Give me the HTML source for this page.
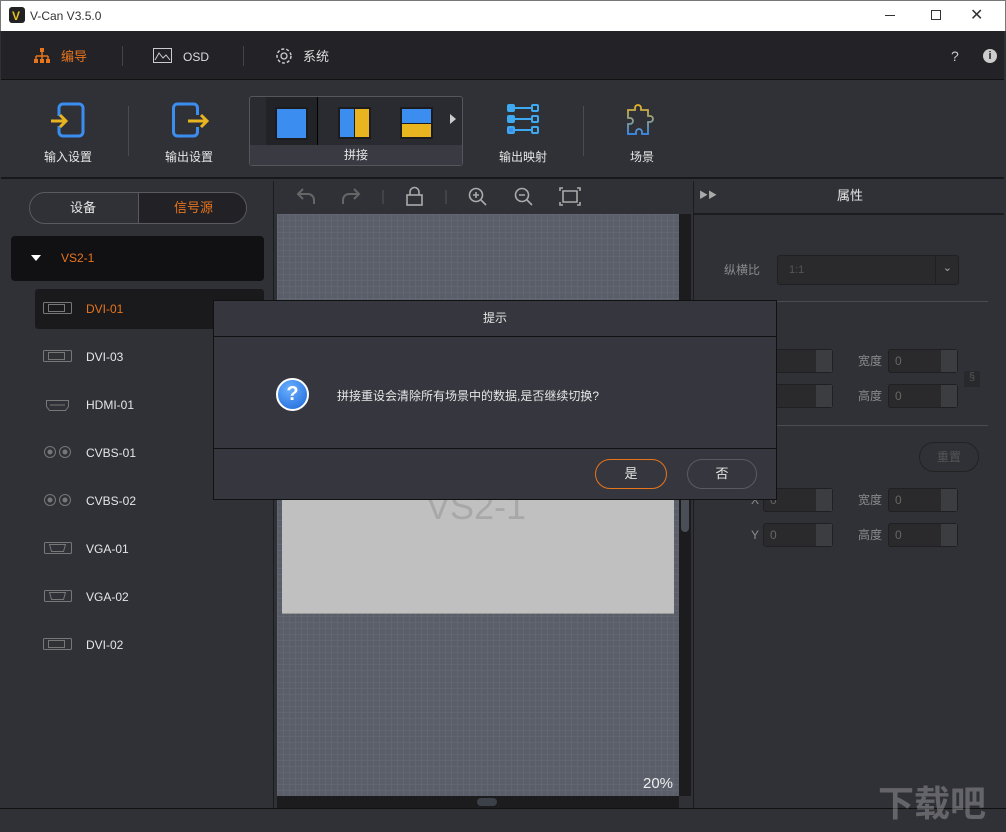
<!DOCTYPE html>
<html><head><meta charset="utf-8"><style>
*{margin:0;padding:0;box-sizing:border-box}
body{width:1006px;height:832px;overflow:hidden;background:#303137;font-family:"Liberation Sans","Noto Sans CJK SC",sans-serif;font-size:12px;line-height:1.2;color:#ddd;position:relative}
.a{position:absolute}
.t{color:#e6e6e6}
.inp{position:absolute;background:#2a2a2c;border:1px solid #202022;border-radius:3px;height:24px;width:70px;color:#666;font-size:12px;padding:4px 6px}
.inp:after{content:"";position:absolute;right:0;top:0;width:16px;height:22px;background:#3c3d41}
.lbl{position:absolute;color:#8a8a8a;font-size:12px}
.src{position:absolute;left:86px;font-size:12px;color:#e6e6e6}
</style></head><body>
<!-- title bar -->
<div class="a" style="left:0;top:0;width:1006px;height:31px;background:#fff;border:1px solid #777;border-bottom:none"></div>
<div class="a" style="left:9px;top:7px;width:16px;height:16px;background:#222;border-radius:3px"></div>
<div class="a" style="left:12px;top:9px;font-size:12px;font-weight:bold;color:#e8c020">V</div>
<div class="a" style="left:30px;top:9px;color:#333;font-size:12px">V-Can V3.5.0</div>
<div class="a" style="left:885px;top:15px;width:10px;height:1px;background:#333"></div>
<div class="a" style="left:931px;top:10px;width:10px;height:10px;border:1px solid #333"></div>
<div class="a" style="left:970px;top:6px;font-size:16px;color:#333">✕</div>
<!-- nav -->
<div class="a" style="left:1px;top:31px;width:1003px;height:49px;background:#222227;border-bottom:1px solid #111"></div>
<svg class="a" style="left:33px;top:48px" width="18" height="16"><rect x="7" y="0" width="4" height="4" fill="#e8741c"/><path d="M9 4v4M3 8h12M3 8v3M15 8v3M9 8v3" stroke="#e8741c" stroke-width="1.5"/><rect x="1" y="11" width="4" height="4" fill="#e8741c"/><rect x="7" y="11" width="4" height="4" fill="#e8741c"/><rect x="13" y="11" width="4" height="4" fill="#e8741c"/></svg>
<div class="a" style="left:61px;top:49px;color:#e8741c;font-size:13px">编导</div>
<div class="a" style="left:122px;top:46px;width:1px;height:20px;background:#444"></div>
<svg class="a" style="left:153px;top:48px" width="20" height="15"><rect x="0.5" y="0.5" width="18" height="14" fill="none" stroke="#ccc"/><path d="M2 12l4-7 4 5 3-3 4 5" fill="none" stroke="#ccc"/></svg>
<div class="a" style="left:183px;top:50px;font-size:12px;color:#ddd">OSD</div>
<div class="a" style="left:243px;top:46px;width:1px;height:20px;background:#444"></div>
<svg class="a" style="left:275px;top:47px" width="18" height="18"><circle cx="9" cy="9" r="3" fill="none" stroke="#ccc" stroke-width="1.3"/><circle cx="9" cy="9" r="7" fill="none" stroke="#ccc" stroke-width="1.5" stroke-dasharray="3 2"/></svg>
<div class="a" style="left:303px;top:49px;font-size:13px;color:#ddd">系统</div>
<div class="a" style="left:951px;top:48px;font-size:14px;color:#ccc">?</div>
<div class="a" style="left:983px;top:49px;width:14px;height:14px;border-radius:50%;background:#ccc;color:#222;font-size:11px;font-weight:bold;text-align:center;line-height:14px">i</div>
<!-- toolbar -->
<div class="a" style="left:1px;top:81px;width:1003px;height:98px;background:#303137;border-bottom:2px solid #18181a"></div>
<svg class="a" style="left:50px;top:102px" width="36" height="36"><rect x="9" y="2" width="24" height="32" rx="4" fill="none" stroke="#3b8ef0" stroke-width="3"/><rect x="0" y="14" width="14" height="10" fill="#303137"/><path d="M1 19h14M10 13l6 6-6 6" fill="none" stroke="#e8b420" stroke-width="3"/></svg>
<div class="a t" style="left:44px;top:150px;font-size:12px">输入设置</div>
<div class="a" style="left:128px;top:106px;width:1px;height:50px;background:#4a4b50"></div>
<svg class="a" style="left:172px;top:102px" width="38" height="36"><rect x="1.5" y="2" width="24" height="32" rx="4" fill="none" stroke="#3b8ef0" stroke-width="3"/><rect x="18" y="13" width="20" height="12" fill="#303137"/><path d="M16 19h18M29 13l6 6-6 6" fill="none" stroke="#e8b420" stroke-width="3"/></svg>
<div class="a t" style="left:165px;top:150px;font-size:12px">输出设置</div>
<div class="a" style="left:249px;top:96px;width:214px;height:70px;border:1px solid #55565c;border-radius:3px;background:#2a2b30"></div>
<div class="a" style="left:250px;top:145px;width:212px;height:20px;background:#3a3b42"></div>
<div class="a t" style="left:344px;top:148px;font-size:12px">拼接</div>
<div class="a" style="left:266px;top:97px;width:51px;height:48px;background:#222327"></div>
<div class="a" style="left:317px;top:97px;width:1px;height:48px;background:#000"></div>
<div class="a" style="left:275px;top:107px;width:33px;height:33px;background:#3b8ef0;border:2px solid #1c1c1f"></div>
<div class="a" style="left:338px;top:107px;width:33px;height:32px;background:#1c1c1f"></div>
<div class="a" style="left:340px;top:109px;width:14px;height:28px;background:#3b8ef0"></div>
<div class="a" style="left:355px;top:109px;width:14px;height:28px;background:#e8b420"></div>
<div class="a" style="left:400px;top:107px;width:33px;height:32px;background:#1c1c1f"></div>
<div class="a" style="left:402px;top:109px;width:29px;height:14px;background:#3b8ef0"></div>
<div class="a" style="left:402px;top:124px;width:29px;height:13px;background:#e8b420"></div>
<div class="a" style="left:450px;top:114px;width:0;height:0;border-left:6px solid #ccc;border-top:5px solid transparent;border-bottom:5px solid transparent"></div>
<svg class="a" style="left:507px;top:104px" width="32" height="32"><g fill="#3ea8f0" stroke="#3ea8f0" stroke-width="2"><rect x="1" y="1" width="6" height="6" rx="1"/><rect x="1" y="12" width="6" height="6" rx="1"/><rect x="1" y="23" width="6" height="6" rx="1" fill="#3b8ef0"/></g><g fill="none" stroke="#3ea8f0" stroke-width="2"><rect x="25" y="1" width="6" height="6" rx="1"/><rect x="25" y="12" width="6" height="6" rx="1"/><rect x="25" y="23" width="6" height="6" rx="1"/><path d="M7 4h18M7 15h18M7 26h18"/></g></svg>
<div class="a t" style="left:499px;top:150px;font-size:12px">输出映射</div>
<div class="a" style="left:583px;top:106px;width:1px;height:50px;background:#4a4b50"></div>
<svg class="a" style="left:626px;top:104px" width="32" height="32"><defs><linearGradient id="g" x1="0" y1="0" x2="0" y2="1"><stop offset="0" stop-color="#e8b420"/><stop offset="1" stop-color="#3b8ef0"/></linearGradient></defs><path d="M2 6h7V4a3 3 0 0 1 6 0v2h7v6h2a3 3 0 0 1 0 6h-2v12h-6v-2a3 3 0 0 0-6 0v2H2V20h2a3 3 0 0 0 0-6H2z" fill="none" stroke="url(#g)" stroke-width="1.8"/></svg>
<div class="a t" style="left:630px;top:150px;font-size:12px">场景</div>
<!-- left panel -->
<div class="a" style="left:1px;top:181px;width:273px;height:627px;background:#303137;border-right:1px solid #1c1c1e"></div>
<div class="a" style="left:29px;top:192px;width:218px;height:32px;border:1px solid #5a5b60;border-radius:16px;overflow:hidden;background:#303137">
<div class="a" style="left:108px;top:0;width:110px;height:30px;background:#222226;border-left:1px solid #5a5b60"></div></div>
<div class="a t" style="left:70px;top:200px;font-size:13px">设备</div>
<div class="a" style="left:174px;top:200px;font-size:13px;color:#e8741c">信号源</div>
<div class="a" style="left:11px;top:236px;width:253px;height:45px;background:#111114;border-radius:4px"></div>
<div class="a" style="left:31px;top:255px;width:0;height:0;border-top:6px solid #fff;border-left:5px solid transparent;border-right:5px solid transparent"></div>
<div class="a" style="left:61px;top:251px;color:#e8741c;font-size:12px">VS2-1</div>
<div class="a" style="left:35px;top:289px;width:229px;height:40px;background:#1a1a1d;border-radius:3px"></div>
<div class="src" style="top:302px;color:#e8741c">DVI-01</div>
<div class="src" style="top:350px">DVI-03</div>
<div class="src" style="top:398px">HDMI-01</div>
<div class="src" style="top:446px">CVBS-01</div>
<div class="src" style="top:494px">CVBS-02</div>
<div class="src" style="top:542px">VGA-01</div>
<div class="src" style="top:590px">VGA-02</div>
<div class="src" style="top:638px">DVI-02</div>
<svg class="a" style="left:42px;top:300px" width="32" height="360" fill="none" stroke="#777">
<rect x="1.5" y="2.5" width="28" height="11" rx="1"/><rect x="6.5" y="4.5" width="16" height="7"/>
<rect x="1.5" y="50.5" width="28" height="11" rx="1"/><rect x="6.5" y="52.5" width="16" height="7"/>
<path d="M4.5 100.5h22v6l-3 4h-16l-3-4z"/><path d="M8 105h15"/>
<circle cx="8" cy="152" r="5.5"/><circle cx="8" cy="152" r="2" fill="#777"/><circle cx="23" cy="152" r="5.5"/><circle cx="23" cy="152" r="2" fill="#777"/>
<circle cx="8" cy="200" r="5.5"/><circle cx="8" cy="200" r="2" fill="#777"/><circle cx="23" cy="200" r="5.5"/><circle cx="23" cy="200" r="2" fill="#777"/>
<rect x="2.5" y="242.5" width="27" height="11" rx="1"/><path d="M7.5 244.5h16l-2 7h-12z"/>
<rect x="2.5" y="290.5" width="27" height="11" rx="1"/><path d="M7.5 292.5h16l-2 7h-12z"/>
<rect x="1.5" y="338.5" width="28" height="11" rx="1"/><rect x="6.5" y="340.5" width="16" height="7"/>
</svg>
<!-- canvas -->
<div class="a" style="left:275px;top:181px;width:418px;height:627px;background:#303137"></div>
<svg class="a" style="left:295px;top:186px" width="300" height="22" fill="none" stroke="#666" stroke-width="2">
<path d="M3 8h10a6 6 0 0 1 6 6v4M8 3L3 8l5 5"/><path d="M64 8H54a6 6 0 0 0-6 6v4M59 3l5 5-5 5" />
<path d="M88 4v14" stroke="#555" stroke-width="1"/>
<rect x="112" y="9" width="15" height="10" stroke="#aaa" stroke-width="1.6"/><path d="M115 9V6a4.5 4.5 0 0 1 9 0v3" stroke="#aaa" stroke-width="1.6"/>
<path d="M151 4v14" stroke="#555" stroke-width="1"/>
<circle cx="181" cy="9" r="6.5" stroke="#aaa" stroke-width="1.6"/><path d="M186 14l5 5M178 9h6M181 6v6" stroke="#aaa" stroke-width="1.6"/>
<circle cx="227" cy="9" r="6.5" stroke="#aaa" stroke-width="1.6"/><path d="M232 14l5 5M224 9h6" stroke="#aaa" stroke-width="1.6"/>
<path d="M268 2h-3v3M268 19h-3v-3M282 2h3v3M282 19h3v-3M268 5h14v11h-14z" stroke="#aaa" stroke-width="1.6"/>
</svg>
<div class="a" style="left:277px;top:214px;width:402px;height:582px;background-color:#5a5e69;background-image:linear-gradient(#626672 1px,transparent 1px),linear-gradient(90deg,#626672 1px,transparent 1px);background-size:6px 6px"></div>
<div class="a" style="left:282px;top:420px;width:392px;height:194px;background:#c0c0c0;border-bottom:1px solid #999"></div>
<div class="a" style="left:426px;top:485px;font-size:36px;color:#a8a8a8">VS2-1</div>
<div class="a" style="left:643px;top:775px;font-size:15px;color:#eee">20%</div>
<div class="a" style="left:679px;top:214px;width:12px;height:582px;background:#1c1c1e"></div>
<div class="a" style="left:681px;top:480px;width:8px;height:52px;background:#4a4e57;border-radius:4px"></div>
<div class="a" style="left:277px;top:796px;width:402px;height:12px;background:#1c1c1e"></div>
<div class="a" style="left:477px;top:798px;width:20px;height:8px;background:#3c4048;border-radius:4px"></div>
<!-- right panel -->
<div class="a" style="left:693px;top:181px;width:312px;height:627px;background:#303137;border-left:1px solid #1c1c1e"></div>
<div class="a" style="left:694px;top:213px;width:310px;height:2px;background:#1c1c1e"></div>
<div class="a" style="left:699px;top:190px;font-size:9px;color:#aaa">▶▶</div>
<div class="a t" style="left:837px;top:188px;font-size:13px">属性</div>
<div class="lbl" style="left:724px;top:263px">纵横比</div>
<div class="a" style="left:777px;top:255px;width:182px;height:30px;background:#2a2a2c;border:1px solid #202022;border-radius:3px"><span style="position:absolute;left:11px;top:8px;color:#555;font-size:11px">1:1</span><div style="position:absolute;right:22px;top:0;width:1px;height:28px;background:#202022"></div><span style="position:absolute;right:6px;top:6px;color:#aaa;font-size:11px">⌄</span></div>
<div class="a" style="left:708px;top:301px;width:280px;height:1px;background:#4a4b50"></div>
<div class="a" style="left:708px;top:425px;width:280px;height:1px;background:#4a4b50"></div>
<div class="inp" style="left:763px;top:349px"></div>
<div class="inp" style="left:763px;top:384px"></div>
<div class="lbl" style="left:858px;top:354px">宽度</div>
<div class="inp" style="left:888px;top:349px">0</div>
<div class="lbl" style="left:858px;top:389px">高度</div>
<div class="inp" style="left:888px;top:384px">0</div>
<div class="a" style="left:964px;top:371px;width:16px;height:16px;background:#28292c;color:#555;font-size:11px;text-align:center">§</div>
<div class="a" style="left:919px;top:442px;width:60px;height:30px;border:1px solid #222;border-radius:15px;color:#555;font-size:12px;text-align:center;line-height:28px">重置</div>
<div class="lbl" style="left:751px;top:493px">X</div>
<div class="inp" style="left:763px;top:488px">0</div>
<div class="lbl" style="left:751px;top:528px">Y</div>
<div class="inp" style="left:763px;top:523px">0</div>
<div class="lbl" style="left:858px;top:493px">宽度</div>
<div class="inp" style="left:888px;top:488px">0</div>
<div class="lbl" style="left:858px;top:528px">高度</div>
<div class="inp" style="left:888px;top:523px">0</div>
<!-- status -->
<div class="a" style="left:0;top:808px;width:1006px;height:24px;background:#303137;border-top:1px solid #111"></div>
<div class="a" style="left:878px;top:782px;font-size:36px;color:rgba(255,255,255,0.25);font-weight:bold">下载吧</div>
<!-- dialog -->
<div class="a" style="left:213px;top:300px;width:564px;height:200px;background:#36373e;border:1px solid #111"></div>
<div class="a" style="left:214px;top:336px;width:562px;height:1px;background:#111"></div>
<div class="a" style="left:214px;top:448px;width:562px;height:1px;background:#111"></div>
<div class="a t" style="left:483px;top:311px;font-size:12px">提示</div>
<div class="a" style="left:276px;top:378px;width:33px;height:33px;border-radius:50%;background:radial-gradient(circle at 40% 30%,#6ab0ff,#1a66d8);border:2px solid #fff;color:#fff;font-size:20px;font-weight:bold;text-align:center;line-height:29px">?</div>
<div class="a t" style="left:337px;top:389px;font-size:12px">拼接重设会清除所有场景中的数据,是否继续切换?</div>
<div class="a t" style="left:595px;top:459px;width:72px;height:30px;border:1px solid #e8741c;border-radius:15px;text-align:center;line-height:28px;font-size:13px">是</div>
<div class="a t" style="left:687px;top:459px;width:70px;height:30px;border:1px solid #5a5b60;border-radius:15px;text-align:center;line-height:28px;font-size:13px">否</div>
</body></html>
